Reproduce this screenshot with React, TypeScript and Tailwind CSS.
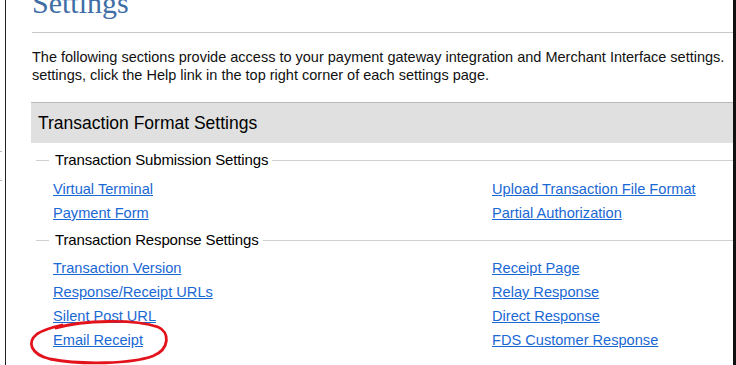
const submissionLinks: [string, string][] = [
  ["Virtual Terminal", "Upload Transaction File Format"],
  ["Payment Form", "Partial Authorization"],
];

const responseLinks: [string, string][] = [
  ["Transaction Version", "Receipt Page"],
  ["Response/Receipt URLs", "Relay Response"],
  ["Silent Post URL", "Direct Response"],
  ["Email Receipt", "FDS Customer Response"],
];

function Legend({ title }: { title: string }) {
  return (
    <div className="flex h-[20px] items-center pl-[4px]">
      <div className="mr-[6px] h-px w-[13px] bg-[#cfcfcf]" />
      <span className="text-[15px] leading-[20px] tracking-[-0.15px] text-black">{title}</span>
      <div className="ml-[4px] h-px flex-1 bg-[#cfcfcf]" />
    </div>
  );
}

function LinkGrid({ rows }: { rows: [string, string][] }) {
  return (
    <div className="grid grid-cols-[439px_1fr] pl-[21px]">
      {rows.map(([left, right]) => (
        <div key={left} className="contents">
          <a href="#" className="text-[14.6px] leading-[24px] text-[#1a68d4] underline">
            {left}
          </a>
          <a href="#" className="text-[14.6px] leading-[24px] text-[#1a68d4] underline">
            {right}
          </a>
        </div>
      ))}
    </div>
  );
}

export default function App() {
  return (
    <div className="relative flex h-[365px] w-[736px] overflow-hidden bg-white font-['Liberation_Sans',Arial,sans-serif]">
      {/* page chrome on the left */}
      <div className="w-[5px] shrink-0" />
      <div className="w-px shrink-0 bg-[#222]" />

      <div className="flex min-w-0 flex-1 flex-col pl-[26px]">
        <h1 className="-mt-[12px] font-['Liberation_Serif',Georgia,serif] text-[30px] leading-[30px] text-[#3f6ea6]">
          Settings
        </h1>
        <div className="mt-[14px] h-px bg-[#c8c8c8]" />

        <p className="mt-[15px] text-[14.5px] leading-[18px] text-[#111]">
          The following sections provide access to your payment gateway integration and Merchant Interface settings.
          <br />
          settings, click the Help link in the top right corner of each settings page.
        </p>

        <div className="-ml-px mt-[18px] border-t border-[#b9b9b9] bg-[#e0e0e0] pl-[7px]">
          <h2 className="text-[17.5px] leading-[40px] text-black">Transaction Format Settings</h2>
        </div>

        <div className="mt-[7px]">
          <Legend title="Transaction Submission Settings" />
        </div>
        <div className="mt-[7px]">
          <LinkGrid rows={submissionLinks} />
        </div>

        <div className="mt-[5px]">
          <Legend title="Transaction Response Settings" />
        </div>
        <div className="mt-[6px]">
          <LinkGrid rows={responseLinks} />
        </div>
      </div>

      <div className="w-[3px] shrink-0 bg-[#111]" />

      {/* stray dots at the left edge */}
      <div className="absolute left-0 top-[151px] h-px w-[2px] bg-[#b8b8c8]" />
      <div className="absolute left-0 top-[180px] h-px w-[2px] bg-[#b8b8c8]" />

      {/* hand-drawn red circle */}
      <svg className="pointer-events-none absolute left-0 top-0" width="736" height="365">
        <path
          d="M 56 328 C 84 320, 134 319, 158 327 C 170 332, 170 349, 153 356 C 131 364, 82 365, 50 359 C 30 354, 27 342, 37 334 C 43 330, 49 328, 62 325"
          fill="none"
          stroke="#e3131b"
          strokeWidth="2.8"
          strokeLinecap="round"
        />
      </svg>
    </div>
  );
}
